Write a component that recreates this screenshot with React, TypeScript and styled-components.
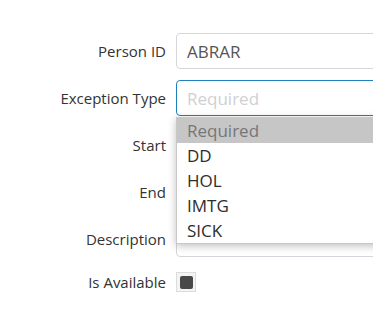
import styled, { createGlobalStyle } from 'styled-components'

const GlobalStyle = createGlobalStyle`
    html, body {
        margin: 0;
        padding: 0;
        background: #fff;
        overflow: hidden;
    }
    body {
        font-family: 'Open Sans', 'Liberation Sans', sans-serif;
    }
`

const Form = styled.form`
    display: grid;
    grid-template-columns: 166px 320px;
    column-gap: 10px;
    row-gap: 11px;
    padding-top: 33px;
    align-items: center;
`

const Label = styled.label<{ $short?: boolean }>`
    text-align: right;
    font-size: 15px;
    color: #333;
    line-height: 20px;
    margin-top: ${p => (p.$short ? '3px' : '0')};
`

const Field = styled.div`
    position: relative;
`

const Input = styled.input<{ $focused?: boolean }>`
    box-sizing: border-box;
    width: 100%;
    height: 36px;
    padding: 0 10px;
    border: 1px solid ${p => (p.$focused ? '#1f81bc' : '#d3d6da')};
    border-radius: 4px;
    font-family: inherit;
    font-size: 17px;
    color: #555;
    background: #fff;
    outline: none;

    &::placeholder {
        color: #d0d0d0;
    }
`

const Dropdown = styled.ul`
    position: absolute;
    top: 100%;
    left: 0;
    width: 100%;
    margin: 1px 0 0;
    padding: 0;
    list-style: none;
    background: #fff;
    border: 1px solid #c8c8c8;
    box-shadow: 0 2px 8px rgba(0, 0, 0, 0.25);
    z-index: 2;
`

const Option = styled.li<{ $selected?: boolean }>`
    height: 25px;
    line-height: 25px;
    padding: 0 10px;
    font-size: 17px;
    color: ${p => (p.$selected ? '#767676' : '#2d2d2d')};
    background: ${p => (p.$selected ? '#c6c6c6' : 'transparent')};
`

const CheckRow = styled.div`
    display: flex;
    align-items: center;
    height: 20px;
    margin-top: 4px;
`

const CheckBox = styled.span`
    box-sizing: border-box;
    width: 20px;
    height: 20px;
    border: 1px solid #dcdcdc;
    background: #f4f4f4;
    display: flex;
    align-items: center;
    justify-content: center;

    &::after {
        content: '';
        width: 13px;
        height: 13px;
        border-radius: 2px;
        background: #484848;
    }
`

const options = ['DD', 'HOL', 'IMTG', 'SICK']

export default function App() {
    return (
        <>
            <GlobalStyle />
            <Form>
                <Label>Person ID</Label>
                <Field>
                    <Input defaultValue="ABRAR" />
                </Field>

                <Label>Exception Type</Label>
                <Field>
                    <Input $focused placeholder="Required" />
                    <Dropdown>
                        <Option $selected>Required</Option>
                        {options.map(o => (
                            <Option key={o}>{o}</Option>
                        ))}
                    </Dropdown>
                </Field>

                <Label>Start</Label>
                <Field>
                    <Input />
                </Field>

                <Label>End</Label>
                <Field>
                    <Input />
                </Field>

                <Label>Description</Label>
                <Field>
                    <Input />
                </Field>

                <Label $short>Is Available</Label>
                <CheckRow>
                    <CheckBox />
                </CheckRow>
            </Form>
        </>
    )
}
